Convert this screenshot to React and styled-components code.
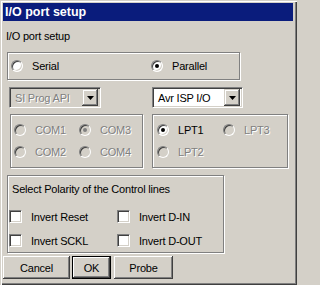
import React from 'react';
import styled, { createGlobalStyle, css } from 'styled-components';

const GlobalStyle = createGlobalStyle`
  html, body {
    margin: 0;
    padding: 0;
    background: #d4d0c8;
  }
  body {
    font-family: "Liberation Sans", Arial, sans-serif;
    font-size: 11px;
    letter-spacing: -0.2px;
    color: #000;
  }
`;

const sunken = css`
  border: 1px solid;
  border-color: #808080 #fff #fff #808080;
  box-shadow: inset 1px 1px 0 #404040, inset -1px -1px 0 #d4d0c8;
`;

const Window = styled.div`
  box-sizing: border-box;
  width: 297px;
  height: 285px;
  padding: 3px 4px 4px 3px;
  background: #d4d0c8;
  box-shadow: inset 1px 1px 0 #d4d0c8, inset 2px 2px 0 #fff,
    inset -1px -1px 0 #404040, inset -2px -2px 0 #808080;
  display: flex;
  flex-direction: column;
`;

const TitleBar = styled.div`
  height: 18px;
  background: #0a1c7c;
  color: #fff;
  font-weight: bold;
  font-size: 12.5px;
  letter-spacing: 0;
  line-height: 18px;
  padding-left: 2px;
  white-space: nowrap;
`;

const Caption = styled.div`
  margin: 9px 0 0 3px;
  line-height: 13px;
  height: 13px;
`;

const Group = styled.div`
  box-sizing: border-box;
  position: relative;
  width: ${p => p.$w}px;
  height: ${p => p.$h}px;
  margin-left: ${p => p.$left || 0}px;
  border: 1px solid #808080;
  box-shadow: inset 1px 1px 0 #fff, 1px 1px 0 #fff;
`;

const RadioRow = styled.div`
  display: flex;
  align-items: center;
  height: ${p => p.$h || 22}px;
  padding-left: ${p => p.$pad || 0}px;
`;

const Option = styled.label`
  display: flex;
  align-items: center;
  width: ${p => p.$w}px;
  white-space: nowrap;
  color: ${p => (p.$disabled ? '#808080' : '#000')};
  text-shadow: ${p => (p.$disabled ? '1px 1px 0 #fff' : 'none')};
`;

const RadioDot = styled.span`
  box-sizing: border-box;
  position: relative;
  flex: none;
  width: 12px;
  height: 12px;
  border-radius: 50%;
  margin-right: 9px;
  background: ${p => (p.$disabled ? '#d4d0c8' : '#fff')};
  ${sunken}

  &::after {
    content: '';
    display: ${p => (p.$checked ? 'block' : 'none')};
    position: absolute;
    left: 3px;
    top: 3px;
    width: 4px;
    height: 4px;
    border-radius: 50%;
    background: ${p => (p.$disabled ? '#808080' : '#000')};
  }
`;

const CheckBox = styled.span`
  box-sizing: border-box;
  flex: none;
  width: 13px;
  height: 13px;
  margin-right: 9px;
  background: #fff;
  ${sunken}
`;

const Row = styled.div`
  display: flex;
  margin-top: ${p => p.$top || 0}px;
`;

const Combo = styled.div`
  box-sizing: border-box;
  display: flex;
  align-items: center;
  width: ${p => p.$w}px;
  height: 21px;
  margin-left: ${p => p.$left || 0}px;
  padding: 2px;
  background: ${p => (p.$disabled ? '#d4d0c8' : '#fff')};
  ${sunken}
`;

const ComboText = styled.span`
  flex: 1;
  padding-left: 3px;
  white-space: nowrap;
  color: ${p => (p.$disabled ? '#808080' : '#000')};
  text-shadow: ${p => (p.$disabled ? '1px 1px 0 #fff' : 'none')};
`;

const ArrowButton = styled.span`
  box-sizing: border-box;
  display: flex;
  align-items: center;
  justify-content: center;
  width: 16px;
  height: 17px;
  background: #d4d0c8;
  box-shadow: inset -1px -1px 0 #404040, inset 1px 1px 0 #d4d0c8,
    inset -2px -2px 0 #808080, inset 2px 2px 0 #fff;
`;

const Polarity = styled(Group)`
  padding: 7px 0 0 1px;
`;

const PolarityTitle = styled.div`
  line-height: 13px;
  padding-left: 3px;
  margin-bottom: 14px;
`;

const CheckGrid = styled.div`
  display: grid;
  grid-template-columns: 108px auto;
  row-gap: 11px;
`;

const Buttons = styled.div`
  display: flex;
  margin-top: 3px;
`;

const Button = styled.button`
  box-sizing: border-box;
  width: ${p => p.$w}px;
  height: 23px;
  margin-left: ${p => p.$left || 0}px;
  padding: 0;
  font: inherit;
  letter-spacing: inherit;
  color: #000;
  background: #d4d0c8;
  border: ${p => (p.$default ? '1px solid #000' : 'none')};
  box-shadow: inset -1px -1px 0 #404040, inset 1px 1px 0 #fff,
    inset -2px -2px 0 #808080, inset 2px 2px 0 #d4d0c8;
`;

const Arrow = () => (
  <svg width="7" height="4" viewBox="0 0 7 4">
    <path d="M0 0h7L3.5 4z" fill="#000" />
  </svg>
);

const Radio = ({ label, w, checked, disabled }) => (
  <Option $w={w} $disabled={disabled}>
    <RadioDot $checked={checked} $disabled={disabled} />
    {label}
  </Option>
);

const Check = ({ label }) => (
  <Option>
    <CheckBox />
    {label}
  </Option>
);

export default function App() {
  return (
    <>
      <GlobalStyle />
      <Window>
        <TitleBar>I/O port setup</TitleBar>
        <Caption>I/O port setup</Caption>

        <Row $top={9}>
          <Group $w={233} $h={28} $left={4}>
            <RadioRow $h={26} $pad={3}>
              <Radio label="Serial" w={140} />
              <Radio label="Parallel" w={80} checked />
            </RadioRow>
          </Group>
        </Row>

        <Row $top={7}>
          <Combo $w={92} $left={6} $disabled>
            <ComboText $disabled>SI Prog API</ComboText>
            <ArrowButton><Arrow /></ArrowButton>
          </Combo>
          <Combo $w={91} $left={51}>
            <ComboText>Avr ISP I/O</ComboText>
            <ArrowButton><Arrow /></ArrowButton>
          </Combo>
        </Row>

        <Row $top={6}>
          <Group $w={133} $h={54} $left={7}>
            <RadioRow $h={4} />
            <RadioRow $pad={3}>
              <Radio label="COM1" w={65} disabled />
              <Radio label="COM3" w={60} checked disabled />
            </RadioRow>
            <RadioRow $pad={3}>
              <Radio label="COM2" w={65} disabled />
              <Radio label="COM4" w={60} disabled />
            </RadioRow>
          </Group>
          <Group $w={136} $h={54} $left={9}>
            <RadioRow $h={4} />
            <RadioRow $pad={4}>
              <Radio label="LPT1" w={66} checked />
              <Radio label="LPT3" w={60} disabled />
            </RadioRow>
            <RadioRow $pad={4}>
              <Radio label="LPT2" w={66} disabled />
            </RadioRow>
          </Group>
        </Row>

        <Row $top={7}>
          <Polarity $w={217} $h={78} $left={4}>
            <PolarityTitle>Select Polarity of the Control lines</PolarityTitle>
            <CheckGrid>
              <Check label="Invert Reset" />
              <Check label="Invert D-IN" />
              <Check label="Invert SCKL" />
              <Check label="Invert D-OUT" />
            </CheckGrid>
          </Polarity>
        </Row>

        <Buttons>
          <Button $w={67}>Cancel</Button>
          <Button $w={39} $left={2} $default>OK</Button>
          <Button $w={59} $left={3}>Probe</Button>
        </Buttons>
      </Window>
    </>
  );
}
